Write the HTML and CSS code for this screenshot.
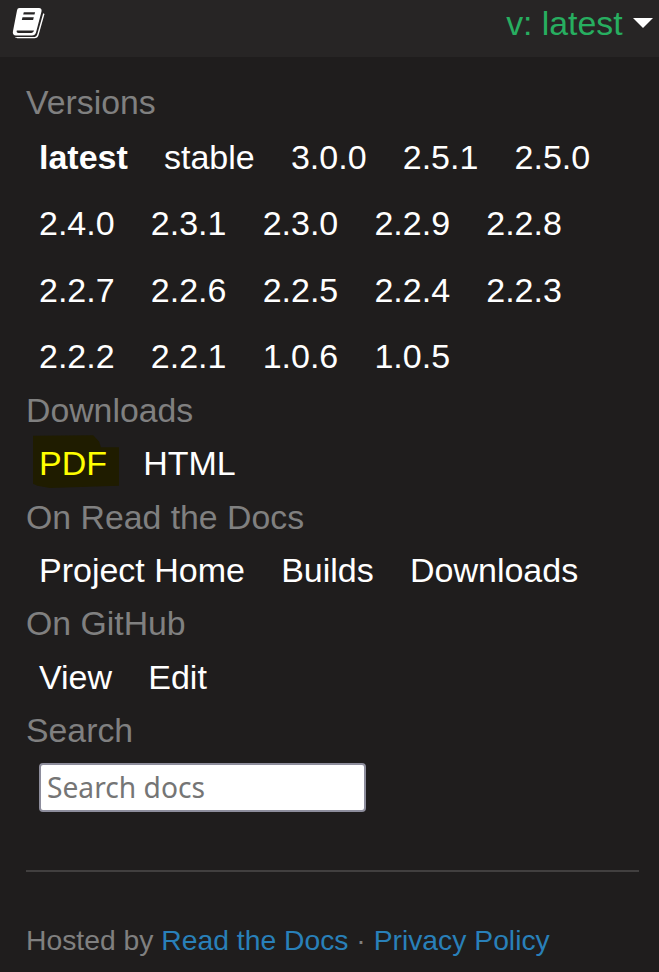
FILE: index.html
```html
<!DOCTYPE html>
<html lang="en">
<head>
  <meta charset="UTF-8">
  <meta name="viewport" content="width=device-width, initial-scale=1.0">
  <title>Read the Docs versions</title>
  <link rel="stylesheet" href="styles.css">
</head>
<body>
  <!--TOP BAR-->
  <div class="top-bar">
    <svg class="book-icon" width="34" height="32" viewBox="0 0 34 32">
      <path fill="#fff" fill-rule="evenodd" d="M7.5 1h19.5c2 0 3 1.500 2.500 3.500l-5.500 21c-.6 2-1.800 3-4 3H4c-2.500 0-3.700-1.800-3-4.500L5 3.500C5.400 1.800 6 1 7.500 1zM11.800 5.300l-.6 2.200h11.300l.6-2.200zM10.500 10.300l-.7 2.700h11.300l.7-2.700zM4.800 23.600c-.5 1.400.2 2.400 1.600 2.400h12.800c1.400 0 2.400-.8 2.800-2.400z"/>
      <path fill="#fff" d="M31.200 6.200l1.300.8-6 21.200c-.6 1.900-1.900 3-4 3H5.500c-1.200 0-2-.4-2.400-1.200h18.600c1.900 0 3-.9 3.600-2.800z"/>
    </svg>
    <span class="current-version">v: latest <span class="caret"></span></span>
  </div>

  <div class="panel">
    <!--VERSIONS-->
    <div class="group">
      <div class="group-title">Versions</div>
      <div class="links versions">
        <a class="current" href="#">latest</a>
        <a href="#">stable</a>
        <a href="#">3.0.0</a>
        <a href="#">2.5.1</a>
        <a href="#">2.5.0</a>
        <a href="#">2.4.0</a>
        <a href="#">2.3.1</a>
        <a href="#">2.3.0</a>
        <a href="#">2.2.9</a>
        <a href="#">2.2.8</a>
        <a href="#">2.2.7</a>
        <a href="#">2.2.6</a>
        <a href="#">2.2.5</a>
        <a href="#">2.2.4</a>
        <a href="#">2.2.3</a>
        <a href="#">2.2.2</a>
        <a href="#">2.2.1</a>
        <a href="#">1.0.6</a>
        <a href="#">1.0.5</a>
      </div>
    </div>

    <!--DOWNLOADS-->
    <div class="group">
      <div class="group-title">Downloads</div>
      <div class="links">
        <a class="highlighted" href="#">PDF</a>
        <a href="#">HTML</a>
      </div>
    </div>

    <div class="group">
      <div class="group-title">On Read the Docs</div>
      <div class="links">
        <a href="#">Project Home</a>
        <a href="#">Builds</a>
        <a href="#">Downloads</a>
      </div>
    </div>

    <div class="group">
      <div class="group-title">On GitHub</div>
      <div class="links">
        <a href="#">View</a>
        <a href="#">Edit</a>
      </div>
    </div>

    <!--SEARCH-->
    <div class="group">
      <div class="group-title">Search</div>
      <input class="search-box" type="text" placeholder="Search docs">
    </div>

    <hr class="divider">

    <p class="hosted">Hosted by <a href="#">Read the Docs</a> · <a href="#">Privacy Policy</a></p>
  </div>
</body>
</html>
```

FILE: styles.css
```css
body {
  background-color: #1f1d1d;
  margin: 0;
  font-family: "Liberation Sans", Arial, sans-serif;
  font-size: 34px;
  line-height: 53.4px;
  color: #fff;
}
a {
  color: #fff;
  text-decoration: none;
}
.top-bar {
  background-color: #272525;
  height: 57px;
  box-sizing: border-box;
  padding: 0 6px 0 12px;
  display: flex;
  justify-content: space-between;
  align-items: flex-start;
}
.book-icon {
  margin-top: 7px;
}
.current-version {
  color: #27ae60;
  font-size: 33.8px;
  line-height: 47px;
}
.caret {
  display: inline-block;
  width: 0;
  height: 0;
  border-left: 10px solid transparent;
  border-right: 10px solid transparent;
  border-top: 10px solid #fff;
  margin-left: 1px;
  vertical-align: 7px;
}
.panel {
  padding: 19px 20px 0 26px;
}
.group-title {
  color: #808080;
  font-size: 33.8px;
}
.links {
  display: flex;
  flex-wrap: wrap;
  column-gap: 36.2px;
  row-gap: 13.07px;
  padding-left: 13px;
}
.versions {
  margin-top: 1.5px;
}
.current {
  font-weight: bold;
}
.highlighted {
  color: #ffff00;
  position: relative;
}
/* dark smudge behind the PDF link */
.highlighted::before {
  content: "";
  position: absolute;
  left: -6px;
  top: -3px;
  width: 86px;
  height: 55px;
  background-color: #1f1c00;
  clip-path: polygon(0 3%, 70% 2%, 77% 14%, 79% 24%, 100% 24%, 100% 94%, 20% 98%, 5% 94%, 0 90%);
  z-index: -1;
}
.search-box {
  display: block;
  box-sizing: border-box;
  width: 327px;
  height: 49px;
  margin: 5px 0 0 13px;
  padding: 0 6px;
  border: 2px solid #8d8d9c;
  border-radius: 4px;
  background-color: #fff;
  font-family: "Noto Sans", Tahoma, sans-serif;
  font-size: 28.2px;
}
.search-box::placeholder {
  color: #757575;
  opacity: 1;
}
.divider {
  border: 0;
  border-top: 2px solid #413f3f;
  margin: 58px 0 0 0;
}
.hosted {
  margin: 42px 0 0 0;
  color: #808080;
  font-size: 28.3px;
  line-height: 53px;
}
.hosted a {
  color: #2980b9;
}
```
